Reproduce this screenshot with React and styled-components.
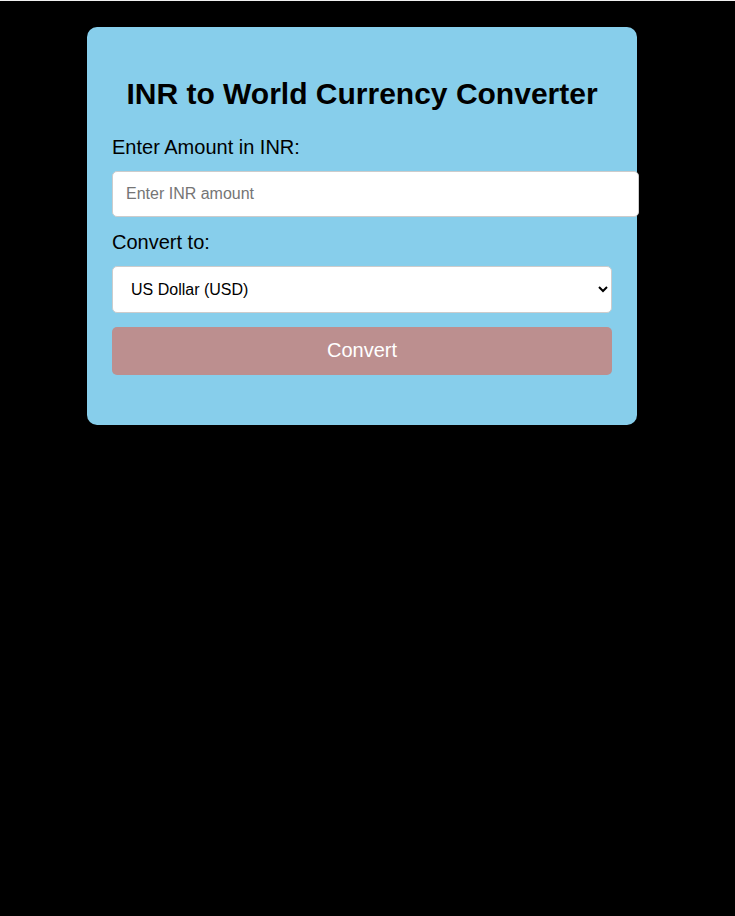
import React, { useState } from 'react'
import styled, { createGlobalStyle } from 'styled-components'

const GlobalStyle = createGlobalStyle`
html {
  background: #000;
  border-top: 1px solid #f0f0f0;
  box-shadow: inset 0 1px 0 #a0a0a0;
}
body {
  margin: 0;
  padding-top: 1px;
  background: #000;
  font-family: "Liberation Sans", Arial, sans-serif;
}
`

const Page = styled.div`
min-height: 915px;
padding: 25px 0 0 87px;
`

const Card = styled.div`
width: 500px;
padding: 25px 25px 50px;
background: #87ceeb;
border-radius: 10px;
`

const Title = styled.h1`
margin: 25px 0 24px;
font-size: 30px;
line-height: 34.5px;
font-weight: bold;
text-align: center;
color: #000;
`

const Label = styled.label`
display: block;
margin-top: ${p => p.$top || 0}px;
margin-bottom: 12px;
font-size: 20px;
line-height: 23px;
color: #000;
`

const Input = styled.input`
display: block;
width: 100%;
height: 20px;
padding: 12px 12px 12px 13px;
border: 1px solid #ccc;
border-radius: 5px;
background: #fff;
font-family: inherit;
font-size: 16px;
color: #000;
outline: none;
&::placeholder {
  color: #757575;
}
`

const Select = styled.select`
display: block;
box-sizing: border-box;
width: 100%;
height: 47px;
padding: 0 8px 0 14px;
border: 1px solid #ccc;
border-radius: 5px;
background: #fff;
font-family: inherit;
font-size: 16px;
color: #000;
outline: none;
`

const Button = styled.button`
display: block;
width: 100%;
height: 48px;
margin-top: 14px;
border: none;
border-radius: 5px;
background: #bc8f8f;
color: #fff;
font-family: inherit;
font-size: 20px;
cursor: pointer;
`

const currencies = [
  ['USD', 'US Dollar (USD)'],
  ['EUR', 'Euro (EUR)'],
  ['GBP', 'British Pound (GBP)'],
  ['JPY', 'Japanese Yen (JPY)'],
  ['AUD', 'Australian Dollar (AUD)'],
]

const App = () => {
  const [amount, setAmount] = useState('')
  const [to, setTo] = useState('USD')
  return (
    <Page>
      <GlobalStyle />
      <Card>
        <Title>INR to World Currency Converter</Title>
        <Label htmlFor="amount">Enter Amount in INR:</Label>
        <Input
          id="amount"
          type="number"
          placeholder="Enter INR amount"
          value={amount}
          onChange={e => setAmount(e.target.value)}
        />
        <Label htmlFor="to" $top={14}>Convert to:</Label>
        <Select id="to" value={to} onChange={e => setTo(e.target.value)}>
          {currencies.map(([code, name]) => (
            <option key={code} value={code}>{name}</option>
          ))}
        </Select>
        <Button>Convert</Button>
      </Card>
    </Page>
  )
}

export default App
